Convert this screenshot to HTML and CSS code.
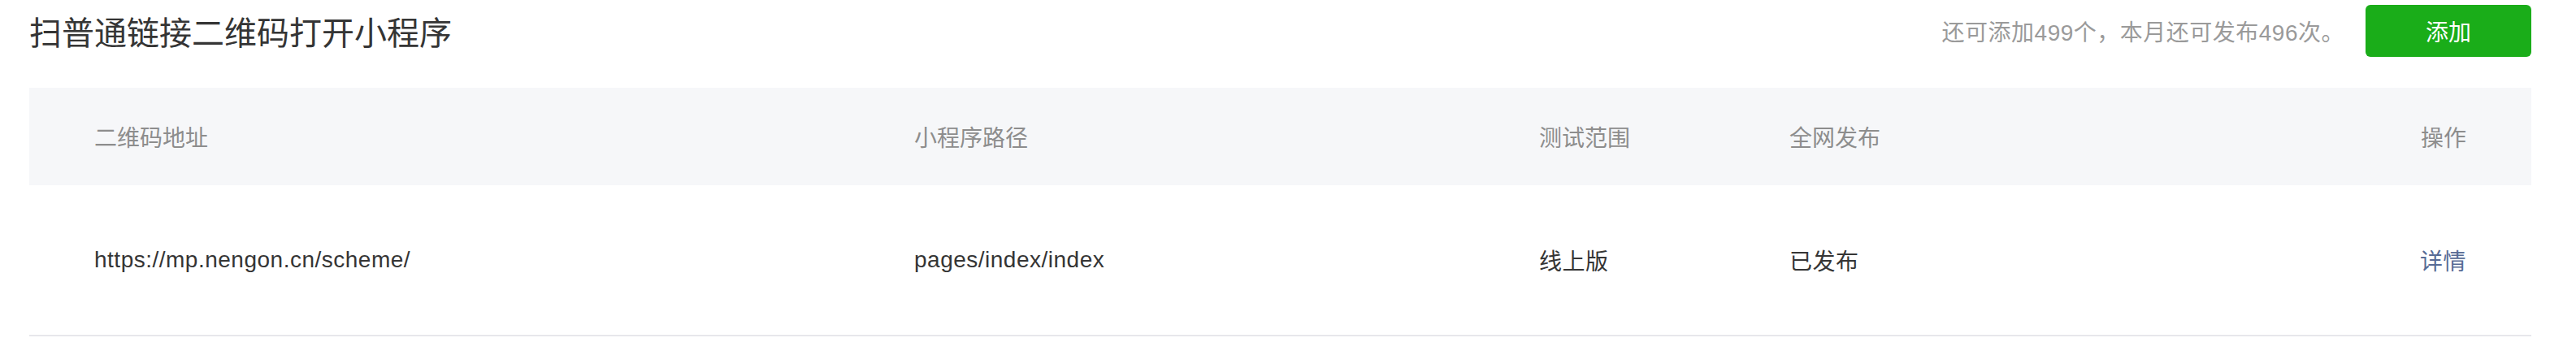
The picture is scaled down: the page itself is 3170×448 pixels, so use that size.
FILE: index.html
```html
<!DOCTYPE html>
<html>
<head>
    <title>扫普通链接二维码打开小程序</title>
    <link rel="stylesheet" href="styles.css">
</head>
<body>
    <div class="pagina">
        <div class="topo">
            <h1>扫普通链接二维码打开小程序</h1>
            <div class="acoes">
                <span class="cota">还可添加499个，本月还可发布496次。</span>
                <button class="btn-adicionar">添加</button>
            </div>
        </div>

        <div class="tabela">
            <div class="linha cabecalho">
                <div class="celula">二维码地址</div>
                <div class="celula">小程序路径</div>
                <div class="celula">测试范围</div>
                <div class="celula">全网发布</div>
                <div class="celula operacao">操作</div>
            </div>
            <div class="linha registro">
                <div class="celula">https://mp.nengon.cn/scheme/</div>
                <div class="celula">pages/index/index</div>
                <div class="celula">线上版</div>
                <div class="celula">已发布</div>
                <div class="celula operacao"><a href="#" class="detalhe">详情</a></div>
            </div>
        </div>
    </div>
</body>
</html>
```

FILE: styles.css
```css
body {
    font-family: "Liberation Sans", "Noto Sans CJK SC", sans-serif;
    background-color: #fff;
    color: #353535;
    margin: 0;
}
.pagina {
    padding: 0 55px 0 36px;
}
.topo {
    display: flex;
    align-items: center;
    justify-content: space-between;
    height: 76px;
}
h1 {
    margin: 0;
    font-size: 40px;
    font-weight: normal;
    color: #353535;
}
.acoes {
    display: flex;
    align-items: center;
    gap: 26px;
}
.cota {
    font-size: 28px;
    letter-spacing: 0.5px;
    color: #9a9a9a;
}
.btn-adicionar {
    width: 204px;
    height: 64px;
    background-color: #1aad19;
    color: #fff;
    border: none;
    border-radius: 6px;
    font-family: inherit;
    font-size: 28px;
    cursor: pointer;
}
.tabela {
    margin-top: 32px;
}
.linha {
    display: grid;
    grid-template-columns: 1009px 769px 308px 1fr 400px;
    align-items: center;
    font-size: 28px;
}
.cabecalho {
    height: 120px;
    background-color: #f6f7f9;
    color: #8d8d8d;
}
.registro {
    height: 184px;
    border-bottom: 2px solid #e7e7eb;
    letter-spacing: 0.5px;
}
.celula {
    padding: 0 80px;
    white-space: nowrap;
}
.operacao {
    text-align: right;
}
.detalhe {
    color: #576b95;
    text-decoration: none;
}
```
